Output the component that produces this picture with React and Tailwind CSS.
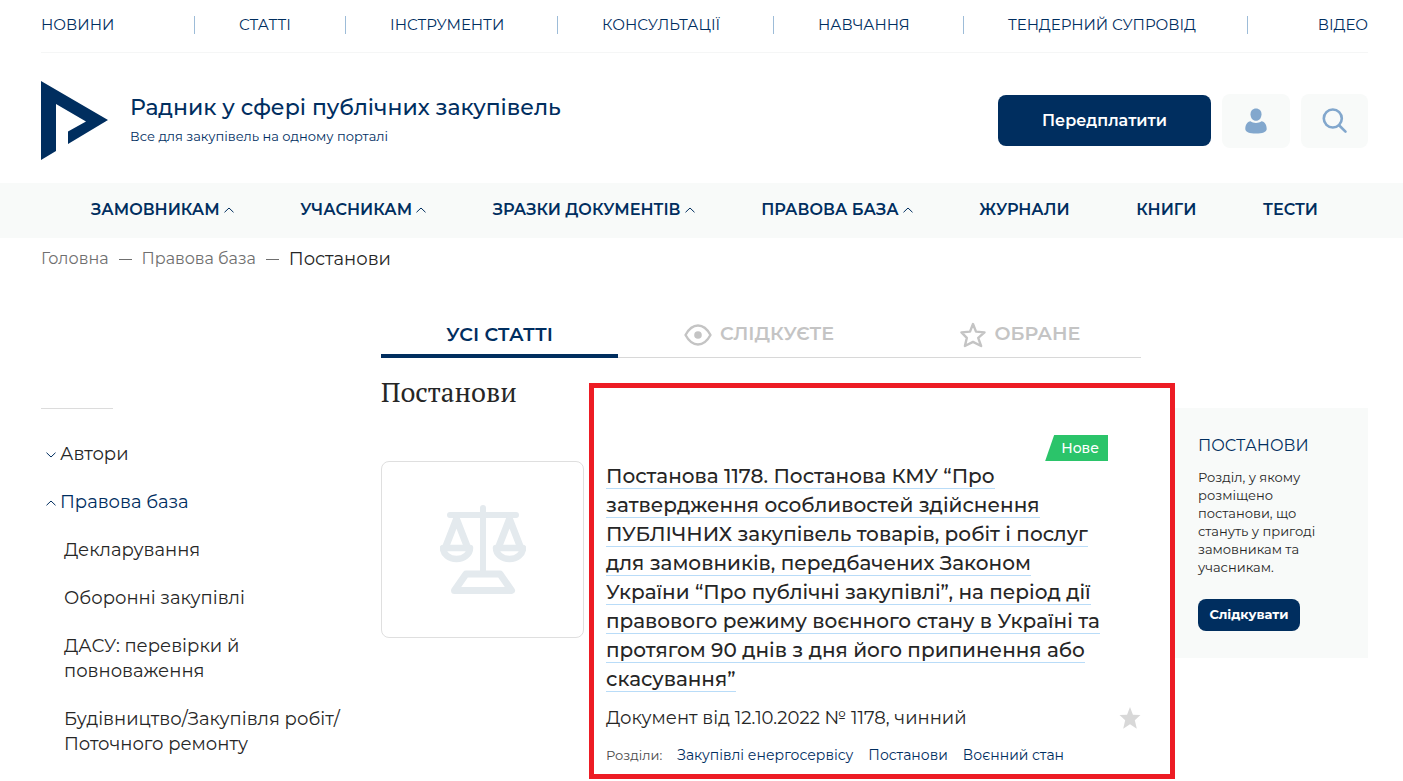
import React from "react";

const topLinks = ["НОВИНИ", "СТАТТІ", "ІНСТРУМЕНТИ", "КОНСУЛЬТАЦІЇ", "НАВЧАННЯ", "ТЕНДЕРНИЙ СУПРОВІД", "ВІДЕО"];

const mainLinks = [
  { text: "ЗАМОВНИКАМ", menu: true },
  { text: "УЧАСНИКАМ", menu: true },
  { text: "ЗРАЗКИ ДОКУМЕНТІВ", menu: true },
  { text: "ПРАВОВА БАЗА", menu: true },
  { text: "ЖУРНАЛИ" },
  { text: "КНИГИ" },
  { text: "ТЕСТИ" },
];

const sections = ["Декларування", "Оборонні закупівлі", "ДАСУ: перевірки й повноваження", "Будівництво/Закупівля робіт/ Поточного ремонту"];

function Chevron({ down = false }) {
  return (
    <svg width="10" height="6" viewBox="0 0 10 6" fill="none" stroke="currentColor" aria-hidden="true">
      <path d={down ? "M0.5 0.7 5 5 9.5 0.7" : "M0.5 5.3 5 1 9.5 5.3"} />
    </svg>
  );
}

function Logo() {
  return (
    <svg width="67" height="79" viewBox="0 0 67 79" fill="#002e5f" aria-hidden="true">
      <path d="M0 0 67 39 27 63V50.500L45 40.500 15 23V70L0 79Z" />
    </svg>
  );
}

function UserIcon() {
  return (
    <svg width="22" height="26" viewBox="0 0 22 26" fill="#82a7cd" aria-hidden="true">
      <path d="M11 0.500c3.300 0 5.500 2.300 5.500 5.700 0 3.600-2.300 6.600-5.500 6.600S5.500 9.800 5.500 6.200C5.500 2.800 7.700 0.500 11 0.500Z" />
      <path d="M5.500 13.200C7 14.300 8.800 14.900 11 14.900s4-.6 5.500-1.700c3.200.5 5.200 3.600 5.200 7.700 0 3.200-4.400 4.600-10.700 4.600S.3 24.100.3 20.900c0-4.100 2-7.200 5.200-7.700Z" />
    </svg>
  );
}

function SearchIcon() {
  return (
    <svg width="26" height="26" viewBox="0 0 26 26" fill="none" stroke="#82a7cd" strokeWidth="2.600" strokeLinecap="round" aria-hidden="true">
      <circle cx="10.800" cy="10.500" r="9" />
      <path d="m17.300 17.500 6.200 6.200" />
    </svg>
  );
}

function EyeIcon() {
  return (
    <svg width="28" height="22" viewBox="0 0 28 22" fill="none" stroke="#c4c4c4" strokeWidth="2.400" aria-hidden="true">
      <path d="M1.500 11C5.200 4.200 9.300 1.500 14 1.500S22.800 4.200 26.500 11C22.800 17.800 18.700 20.500 14 20.500S5.200 17.800 1.500 11Z" strokeLinejoin="round" />
      <circle cx="14" cy="11" r="3.800" fill="#c4c4c4" stroke="none" />
    </svg>
  );
}

function StarOutline() {
  return (
    <svg width="26" height="26" viewBox="0 0 26 26" fill="none" stroke="#c4c4c4" strokeWidth="2.400" strokeLinejoin="round" aria-hidden="true">
      <path d="m13 2 3 7.600 8.500.8-6.300 5.500 2.900 8.100-8.100-4.100L4.900 24l1.900-8.100L1.500 10.400l8.500-.8Z" />
    </svg>
  );
}

function StarSolid() {
  return (
    <svg width="22" height="22" viewBox="0 0 20 21" fill="#d8d8d8" aria-hidden="true">
      <path d="m10 0 2.800 7.300 7.200.4-5.400 5 1.900 8.100L10 16.500l-6.500 4.300 1.900-8.100L0 7.700l7.200-.4Z" />
    </svg>
  );
}

function Scales() {
  return (
    <svg width="86" height="89" viewBox="0 0 86 89" fill="none" stroke="#e4eaee" strokeLinecap="round" strokeLinejoin="round" aria-hidden="true">
      <path d="M43 3V67M10 10H76" strokeWidth="6" />
      <path d="M16.500 14 6 41M16.500 14 27 41M69.500 14 59 41M69.500 14 80 41" strokeWidth="7" />
      <path d="M3 43H30C30 49 24 54 16.500 54S3 49 3 43ZM56 43H83C83 49 77 54 69.500 54S56 49 56 43Z" strokeWidth="6.500" />
      <path d="M26 69H60L71.500 85.500H14.500Z" strokeWidth="7" />
    </svg>
  );
}

export default function App() {
  return (
    <div className="min-h-screen bg-white font-['Montserrat','Inter',sans-serif] text-[#262626]">
      <header className="pl-[41px] pr-[35px]">
        <nav
          aria-label="Розділи порталу"
          className="grid grid-cols-[154fr_151fr_212fr_216fr_190fr_284fr_120fr] items-center border-b border-[#f5f6f6] pt-4 pb-[18px] text-[15px] leading-[18px] text-[#002e5f]"
        >
          {topLinks.map((text) => (
            <a
              key={text}
              href="#"
              className="border-r border-[#9dbcd8] pl-11 whitespace-nowrap first:pl-0 last:border-r-0 last:pl-0 last:text-right"
            >
              {text}
            </a>
          ))}
        </nav>
        <div className="flex items-center py-7 pb-[23px]">
          <a href="#" aria-label="Головна сторінка"><Logo /></a>
          <div className="ml-[22px] flex-1 text-[#002e5f]">
            <p className="text-[22px] leading-7 font-medium">Радник у сфері публічних закупівель</p>
            <p className="mt-0.5 text-[13px] leading-6">Все для закупівель на одному порталі</p>
          </div>
          <button className="h-[51px] w-[213px] rounded-lg bg-[#002e5f] text-base font-semibold text-white">Передплатити</button>
          <button aria-label="Кабінет" className="ml-[11px] flex h-[54px] w-[68px] items-center justify-center rounded-lg bg-[#f8faf9]"><UserIcon /></button>
          <button aria-label="Пошук" className="ml-[11px] flex h-[54px] w-[67px] items-center justify-center rounded-lg bg-[#f8faf9]"><SearchIcon /></button>
        </div>
      </header>

      <nav aria-label="Головне меню" className="flex h-[55px] items-center justify-between bg-[#f8faf9] pr-[85px] pb-px pl-[91px] text-base font-semibold text-[#002e5f]">
        {mainLinks.map((link) => (
          <a key={link.text} href="#" className="flex items-center gap-1 whitespace-nowrap">
            {link.text}
            {link.menu && <Chevron />}
          </a>
        ))}
      </nav>

      <nav aria-label="Шлях" className="flex h-[42px] items-center gap-2.5 pl-[41px] text-base text-[#6f6f6f]">
        <a href="#">Головна</a>
        <span className="h-px w-[13px] bg-[#6f6f6f]" />
        <a href="#">Правова база</a>
        <span className="h-px w-[13px] bg-[#6f6f6f]" />
        <span className="text-lg text-[#262626]">Постанови</span>
      </nav>

      <div className="grid grid-cols-[340px_minmax(0,1fr)_227px] pt-8 pr-[35px] pl-[41px]">
        <aside className="pt-24 pr-5 text-lg leading-[25px]">
          <hr className="w-[72px] border-[#dcdcdc]" />
          <ul className="mt-[33px] flex flex-col gap-[23px]">
            <li>
              <a href="#" className="flex items-center gap-1 pl-[5px]"><span className="text-[#002e5f]"><Chevron down /></span>Автори</a>
            </li>
            <li>
              <a href="#" className="flex items-center gap-1 pl-[5px] text-[#002e5f]"><Chevron />Правова база</a>
            </li>
            {sections.map((text) => (
              <li key={text} className="pl-[23px]"><a href="#">{text}</a></li>
            ))}
          </ul>
        </aside>

        <main>
          <div role="tablist" className="grid grid-cols-3 gap-6 border-b border-[#d8d8d8] text-[19px] font-semibold text-[#c4c4c4]">
            <button role="tab" aria-selected="true" className="-mb-px h-[46px] border-b-4 border-[#002e5f] pt-1 text-[#002e5f]">УСІ СТАТТІ</button>
            <button role="tab" aria-selected="false" className="flex h-[45px] items-center justify-center gap-2 pr-1"><EyeIcon />СЛІДКУЄТЕ</button>
            <button role="tab" aria-selected="false" className="flex h-[45px] items-center justify-center gap-2 pr-1"><StarOutline />ОБРАНЕ</button>
          </div>
          <h1 className="mt-4 font-['PT_Serif','Liberation_Serif',serif] text-[27px] leading-9">Постанови</h1>

          <article className="relative flex items-start gap-[22px] pt-[25px]">
            <div className="mt-[26px] flex h-[177px] w-[203px] shrink-0 items-center justify-center rounded-lg border border-[#dfdfdf]"><Scales /></div>
            <div className="flex-1">
              <div className="flex justify-end pr-[33px]">
                <span className="h-[26px] bg-[#2bc46a] pr-[9px] pl-4 text-sm leading-[26px] font-medium text-white [clip-path:polygon(9px_0,100%_0,100%_100%,0_100%)]">Нове</span>
              </div>
              <h2 className="mt-px text-xl leading-[29px] font-medium">
                <a href="#" className="border-b border-[#b9dcf8]">
                  Постанова 1178. Постанова КМУ “Про<br />
                  затвердження особливостей здійснення<br />
                  ПУБЛІЧНИХ закупівель товарів, робіт і послуг<br />
                  для замовників, передбачених Законом<br />
                  України “Про публічні закупівлі”, на період дії<br />
                  правового режиму воєнного стану в Україні та<br />
                  протягом 90 днів з дня його припинення або<br />
                  скасування”
                </a>
              </h2>
              <div className="mt-2.5 flex items-center justify-between">
                <p className="text-lg leading-7">Документ від 12.10.2022 № 1178, чинний</p>
                <button aria-label="Додати в обране"><StarSolid /></button>
              </div>
              <p className="mt-[13px] flex gap-[15px] text-sm leading-5 text-[#002e5f]">
                <span className="text-[13px] text-[#4a4a4a]">Розділи:</span>
                <a href="#">Закупівлі енергосервісу</a>
                <a href="#">Постанови</a>
                <a href="#">Воєнний стан</a>
              </p>
            </div>
            <div className="pointer-events-none absolute -top-[27px] -right-[34px] -bottom-3.5 left-[208px] border-[5px] border-[#ed1c24]" />
          </article>
        </main>

        <aside className="pt-24 pl-[34px]">
          <div className="bg-[#f8faf9] pt-7 pr-8 pb-[27px] pl-[23px]">
            <h3 className="text-base leading-5 text-[#002e5f]">ПОСТАНОВИ</h3>
            <p className="mt-3 text-[13px] leading-[18px]">Розділ, у якому розміщено постанови, що стануть у пригоді замовникам та учасникам.</p>
            <button className="mt-[23px] h-8 w-[102px] rounded-lg bg-[#002e5f] text-[13px] font-bold text-white">Слідкувати</button>
          </div>
        </aside>
      </div>
    </div>
  );
}
